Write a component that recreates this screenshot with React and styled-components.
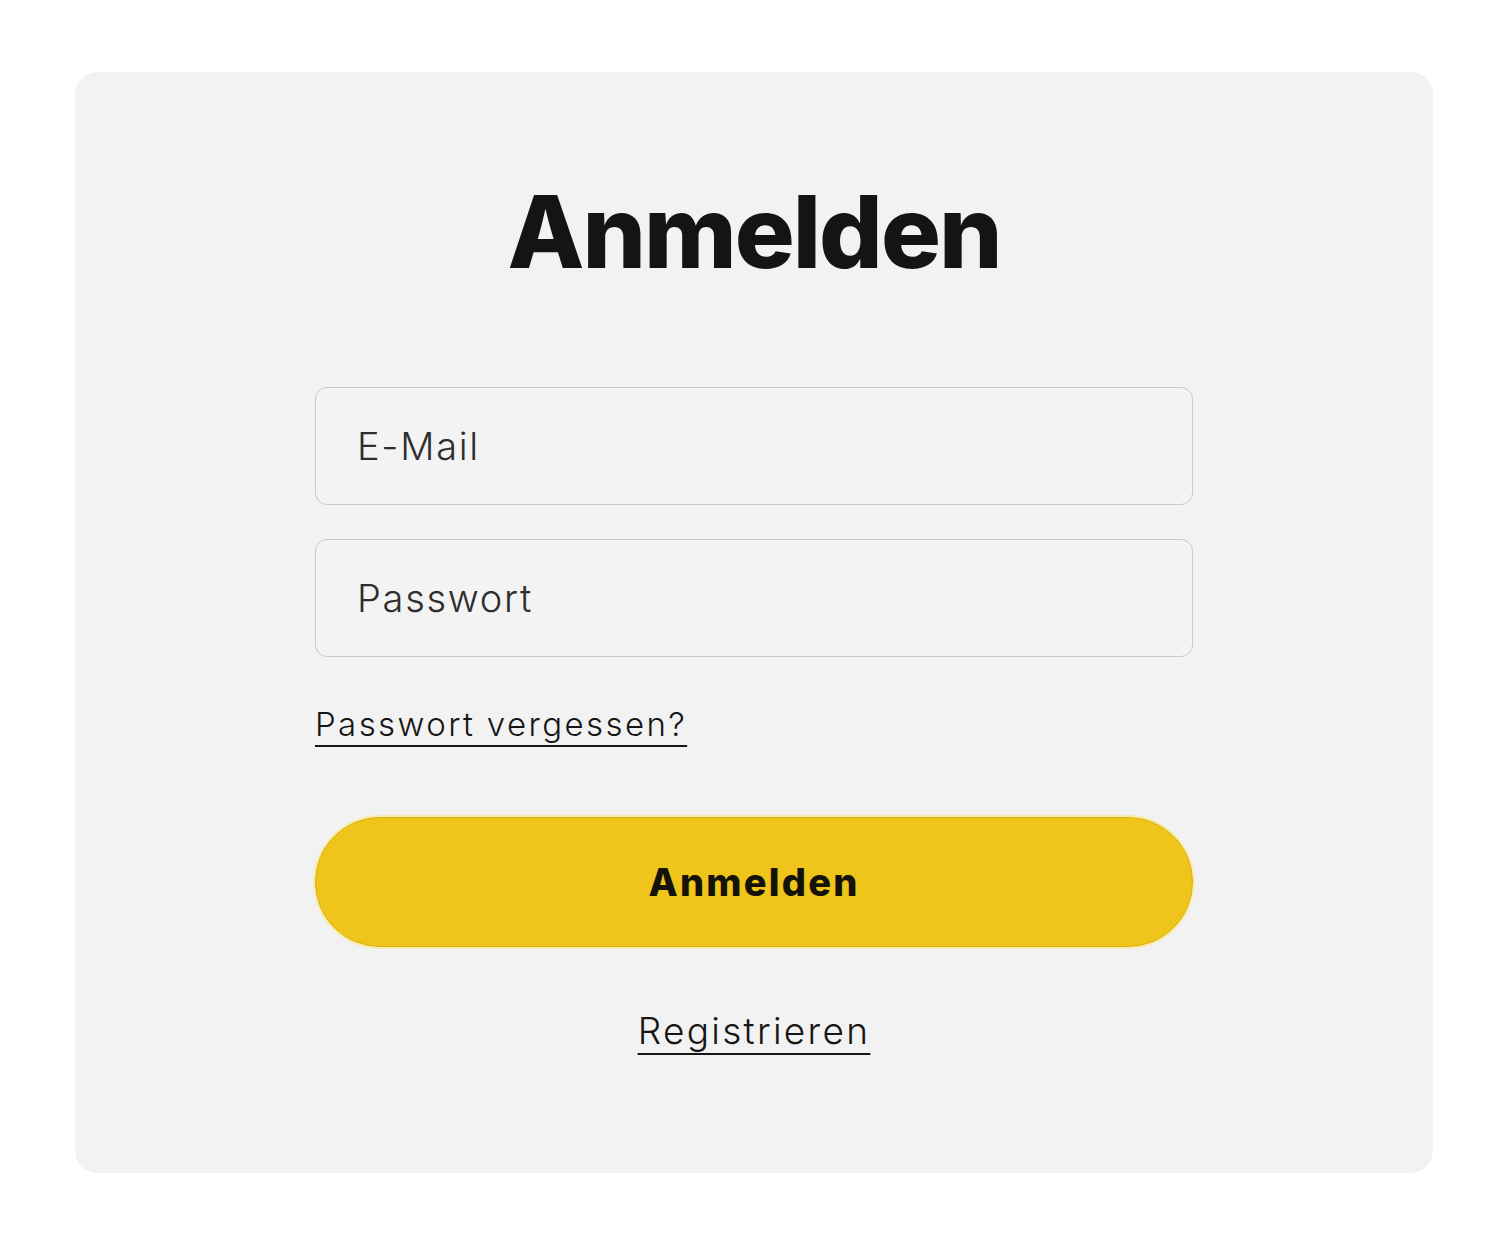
import React from "react";
import styled, { createGlobalStyle } from "styled-components";

const Global = createGlobalStyle`
  html, body { margin: 0; padding: 0; background: #ffffff; }
  body { font-family: Inter, "Noto Sans", sans-serif; }
  * { box-sizing: border-box; }
`;

const Page = styled.div`
  padding: 72px 79px 64px 75px;
`;

const Card = styled.div`
  background: #f2f2f2;
  border-radius: 22px;
  padding: 110px 240px 124px;
  display: flex;
  flex-direction: column;
  align-items: stretch;
`;

const Title = styled.h1`
  margin: 0 0 105px;
  font-family: Inter, sans-serif;
  font-weight: 800;
  font-size: 100px;
  line-height: 1;
  letter-spacing: -2px;
  color: #141414;
  text-align: center;
`;

const Form = styled.form`
  display: flex;
  flex-direction: column;
  gap: 34px;
`;

const Field = styled.input`
  height: 118px;
  width: 100%;
  border: 1px solid #c9c9c9;
  border-radius: 12px;
  background: #f3f3f3;
  padding: 0 41px;
  font-family: Inter, sans-serif;
  font-weight: 300;
  font-size: 38px;
  letter-spacing: 1.7px;
  color: #2a2a2a;
  outline: none;
  &::placeholder { color: #2e2e2e; }
`;

const ForgotRow = styled.div`
  margin-top: 51px;
  line-height: 1;
`;

const TextLink = styled.a`
  font-family: Inter, sans-serif;
  font-weight: 300;
  font-size: ${p => p.$size}px;
  line-height: 1;
  letter-spacing: ${p => p.$spacing}px;
  color: #161616;
  text-decoration: underline;
  text-decoration-thickness: 2px;
  text-underline-offset: 9px;
  cursor: pointer;
`;

const Button = styled.button`
  margin-top: 76px;
  height: 130px;
  width: 100%;
  border-radius: 65px;
  background: #efc41b;
  border: 1px solid #d9b012;
  box-shadow: 0 0 0 2px rgba(255, 232, 120, 0.55);
  font-family: Inter, sans-serif;
  font-weight: 800;
  font-size: 38px;
  letter-spacing: 2.2px;
  color: #151208;
  cursor: pointer;
`;

const RegisterRow = styled.div`
  margin-top: 65px;
  text-align: center;
  line-height: 1;
`;

export default function App() {
  return (
    <>
      <Global />
      <Page>
        <Card>
          <Title>Anmelden</Title>
          <Form onSubmit={e => e.preventDefault()}>
            <Field type="email" placeholder="E-Mail" />
            <Field type="password" placeholder="Passwort" />
          </Form>
          <ForgotRow>
            <TextLink $size={33} $spacing={2.4}>Passwort vergessen?</TextLink>
          </ForgotRow>
          <Button type="button">Anmelden</Button>
          <RegisterRow>
            <TextLink $size={37} $spacing={2.3}>Registrieren</TextLink>
          </RegisterRow>
        </Card>
      </Page>
    </>
  );
}
